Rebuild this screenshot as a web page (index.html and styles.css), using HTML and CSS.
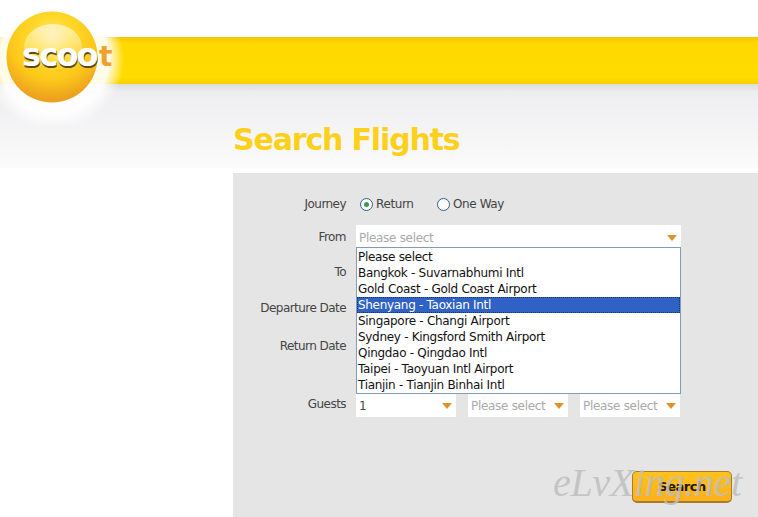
FILE: index.html
```html
<!DOCTYPE html>
<html lang="en">
<head>
  <meta charset="UTF-8">
  <meta name="viewport" content="width=device-width, initial-scale=1.0">
  <title>Scoot - Search Flights</title>
  <link rel="stylesheet" href="styles.css">
</head>
<body>

  <header class="site-header">
    <div class="yellow-band"></div>
    <svg class="logo" width="130" height="125" viewBox="0 0 130 125">
      <defs>
        <radialGradient id="halo" cx="54" cy="60" r="70" gradientUnits="userSpaceOnUse">
          <stop offset="0.78" stop-color="#fff" stop-opacity="0.92"/>
          <stop offset="1" stop-color="#fff" stop-opacity="0"/>
        </radialGradient>
        <radialGradient id="ball" cx="52" cy="38" r="68" gradientUnits="userSpaceOnUse">
          <stop offset="0" stop-color="#ffe98a"/>
          <stop offset="0.3" stop-color="#ffd92a"/>
          <stop offset="0.62" stop-color="#fcc81a"/>
          <stop offset="0.9" stop-color="#eda11e"/>
        </radialGradient>
        <linearGradient id="shine" x1="0" y1="0" x2="0" y2="1">
          <stop offset="0" stop-color="#fff" stop-opacity="0.6"/>
          <stop offset="1" stop-color="#fff" stop-opacity="0"/>
        </linearGradient>
      </defs>
      <circle cx="54" cy="60" r="70" fill="url(#halo)"/>
      <circle cx="52" cy="57" r="45.500" fill="url(#ball)"/>
      <ellipse cx="53" cy="47" rx="29" ry="23" fill="url(#shine)"/>
      <text class="logo-t" x="99" y="66">t</text>
      <text class="logo-shadow" x="22.500" y="67.500">scoo</text>
      <text class="logo-word" x="22" y="66">scoo</text>
    </svg>
  </header>

  <main class="content">
    <h1>Search Flights</h1>

    <form class="search-panel">
      <div class="row row-journey">
        <span class="row-label">Journey</span>
        <label class="radio-option"><span class="radio checked"></span>Return</label>
        <label class="radio-option"><span class="radio"></span>One Way</label>
      </div>

      <div class="row row-from">
        <span class="row-label">From</span>
        <div class="select wide placeholder">Please select</div>
      </div>
      <div class="row row-to">
        <span class="row-label">To</span>
      </div>
      <div class="row row-depart">
        <span class="row-label">Departure Date</span>
      </div>
      <div class="row row-return">
        <span class="row-label">Return Date</span>
      </div>

      <div class="row row-guests">
        <span class="row-label">Guests</span>
        <div class="select small">1</div>
        <div class="select small placeholder">Please select</div>
        <div class="select small placeholder">Please select</div>
      </div>

      <div class="actions">
        <button type="button" class="search-btn">Search</button>
      </div>

      <ul class="dropdown">
        <li>Please select</li>
        <li>Bangkok - Suvarnabhumi Intl</li>
        <li>Gold Coast - Gold Coast Airport</li>
        <li class="active">Shenyang - Taoxian Intl</li>
        <li>Singapore - Changi Airport</li>
        <li>Sydney - Kingsford Smith Airport</li>
        <li>Qingdao - Qingdao Intl</li>
        <li>Taipei - Taoyuan Intl Airport</li>
        <li>Tianjin - Tianjin Binhai Intl</li>
      </ul>

      <span class="watermark">eLvXing.net</span>
    </form>
  </main>

</body>
</html>
```

FILE: styles.css
```css
html, body {
  height: 100%;
}

body {
  font-family: "DejaVu Sans", sans-serif;
  font-size: 12px;
  letter-spacing: -0.300px;
  margin: 0;
  padding: 0;
  background-color: #fff;
  color: #444;
  overflow: hidden;
}

.site-header {
  position: relative;
  height: 168px;
  padding-top: 37px;
  box-sizing: border-box;
  background: linear-gradient(to bottom, #fff 0, #fff 84px, #dcdcdc 84px, #eeeef0 92px, #f2f2f4 115px, #fbfbfb 168px);
}

.yellow-band {
  height: 47px;
  background: linear-gradient(to bottom, #f5c400 0, #ffd800 6px, #ffdc00 40px, #f9d000 47px);
}

.logo {
  position: absolute;
  left: 0;
  top: 0;
}

.logo text {
  font-family: "DejaVu Sans", sans-serif;
  font-weight: bold;
  font-size: 32px;
  letter-spacing: -1.800px;
}

.logo-shadow {
  fill: #5a4a20;
}

.logo-word {
  fill: #fff;
}

.logo .logo-t {
  fill: #f0a030;
  font-size: 28px;
}

.content {
  position: absolute;
  left: 233px;
  right: 0;
  top: 120px;
  bottom: 0;
  display: flex;
  flex-direction: column;
}

h1 {
  margin: 0;
  height: 53px;
  font-size: 30px;
  line-height: 40px;
  font-weight: bold;
  color: #fdd01c;
  letter-spacing: -1.150px;
}

.search-panel {
  position: relative;
  flex: 1;
  background-color: #e5e5e5;
  padding-top: 23px;
}

.row {
  display: flex;
  align-items: flex-start;
}

.row-label {
  width: 113px;
  text-align: right;
  line-height: 16px;
  color: #444;
  margin-right: 10px;
  letter-spacing: -0.550px;
}

.row-journey {
  height: 29px;
  letter-spacing: -0.400px;
}

.row-from {
  height: 35px;
}

.row-from .row-label {
  margin-top: 4px;
}

.row-to {
  height: 36px;
}

.row-to .row-label,
.row-depart .row-label {
  margin-top: 4px;
}

.row-depart {
  height: 38px;
}

.row-return {
  height: 59px;
  padding-top: 4px;
  box-sizing: border-box;
}

.row-guests {
  gap: 12px;
}

.row-guests .row-label {
  margin-right: -2px;
  margin-top: 3px;
}

.row-journey .row-label {
  margin-right: 14px;
}

.radio-option {
  display: flex;
  align-items: center;
  height: 16px;
  width: 77px;
  color: #444;
}

.radio {
  width: 11px;
  height: 11px;
  border: 1px solid #2f5f8f;
  border-radius: 50%;
  background-color: #fff;
  margin-right: 3px;
  position: relative;
}

.radio.checked::after {
  content: "";
  position: absolute;
  left: 3px;
  top: 3px;
  width: 5px;
  height: 5px;
  border-radius: 50%;
  background-color: #3a9a4a;
}

.select {
  position: relative;
  height: 24px;
  line-height: 26px;
  padding-left: 3px;
  box-sizing: border-box;
  background-color: #fff;
  color: #444;
}

.select::after {
  content: "";
  position: absolute;
  right: 4px;
  top: 10px;
  border-left: 5px solid transparent;
  border-right: 5px solid transparent;
  border-top: 6px solid #e0922a;
}

.select.placeholder {
  color: #a9a9a9;
}

.select.wide {
  width: 325px;
}

.select.small {
  width: 100px;
}

.actions {
  display: flex;
  margin-top: 54px;
  padding-left: 399px;
}

.search-btn {
  width: 100px;
  height: 32px;
  padding: 0;
  background: linear-gradient(to bottom, #ffc21c, #fdb01a);
  border: 1px solid #a97a2c;
  border-bottom-width: 2px;
  border-radius: 5px;
  font-family: "DejaVu Sans", sans-serif;
  font-size: 13px;
  font-weight: bold;
  letter-spacing: -0.500px;
  color: #1f1500;
  cursor: pointer;
}

.dropdown {
  position: absolute;
  left: 123px;
  top: 74px;
  width: 323px;
  margin: 0;
  padding: 1px 0 0;
  list-style: none;
  background-color: #fff;
  border: 1px solid #7f9db9;
  color: #111;
}

.dropdown li {
  height: 16px;
  line-height: 16px;
  padding-left: 1px;
}

.dropdown li.active {
  background-color: #2f62c4;
  color: #fff;
  outline: 1px dotted #16336b;
  outline-offset: -1px;
}

.watermark {
  position: absolute;
  left: 320px;
  top: 286px;
  font-family: "Liberation Serif", serif;
  font-style: italic;
  font-size: 40px;
  color: rgba(190, 190, 190, 0.85);
}
```
